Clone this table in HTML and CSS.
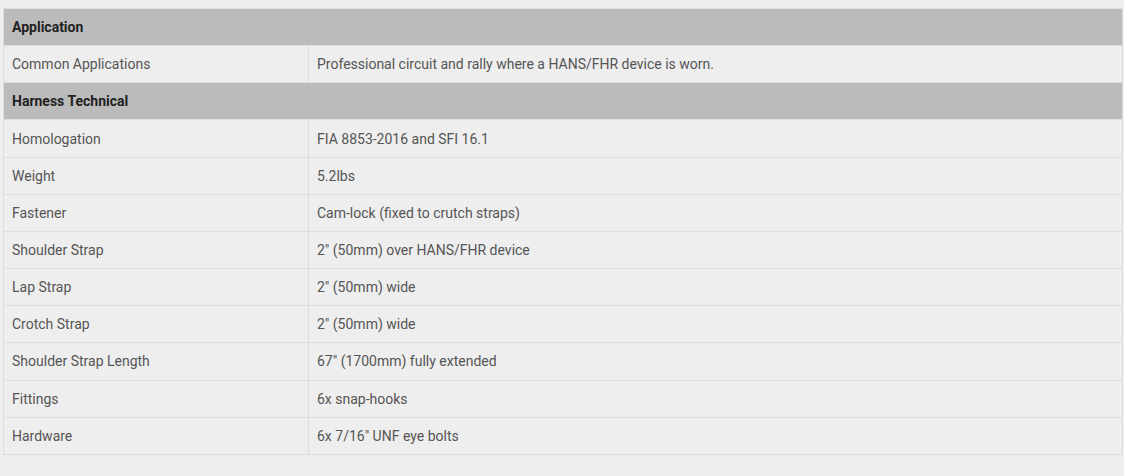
FILE: index.html
```html
<!DOCTYPE html>
<html>
<head>
<meta charset="utf-8">
<link rel="stylesheet" href="styles.css">
</head>
<body>
<div class="wrap">
<table class="spec">
  <tbody>
    <tr class="group"><th colspan="2">Application</th></tr>
    <tr><td class="k">Common Applications</td><td>Professional circuit and rally where a HANS/FHR device is worn.</td></tr>
    <tr class="group"><th colspan="2">Harness Technical</th></tr>
    <tr><td class="k">Homologation</td><td>FIA 8853-2016 and SFI 16.1</td></tr>
    <tr><td class="k">Weight</td><td>5.2lbs</td></tr>
    <tr><td class="k">Fastener</td><td>Cam-lock (fixed to crutch straps)</td></tr>
    <tr><td class="k">Shoulder Strap</td><td>2" (50mm) over HANS/FHR device</td></tr>
    <tr><td class="k">Lap Strap</td><td>2" (50mm) wide</td></tr>
    <tr><td class="k">Crotch Strap</td><td>2" (50mm) wide</td></tr>
    <tr><td class="k">Shoulder Strap Length</td><td>67" (1700mm) fully extended</td></tr>
    <tr><td class="k">Fittings</td><td>6x snap-hooks</td></tr>
    <tr><td class="k">Hardware</td><td>6x 7/16" UNF eye bolts</td></tr>
  </tbody>
</table>
</div>
</body>
</html>
```
FILE: styles.css
```css
html, body {
  margin: 0;
  padding: 0;
  background: #eeeeee;
}
body {
  font-family: Roboto, "Liberation Sans", Arial, sans-serif;
  font-size: 14px;
  color: #555555;
}
.wrap {
  padding: 8px 1px 0 3px;
}
.spec {
  width: 1120px;
  border-collapse: collapse;
  border: 1px solid #dddddd;
}
.spec th, .spec td {
  height: 37.17px;
  box-sizing: border-box;
  padding: 0 8px;
  border: 1px solid #dddddd;
  text-align: left;
  vertical-align: middle;
  line-height: 16px;
}
.spec .group th {
  background: #bbbbbb;
  color: #222222;
  font-weight: 700;
  padding: 0 8px 1px;
}
.spec td.k {
  width: 305px;
}
```
